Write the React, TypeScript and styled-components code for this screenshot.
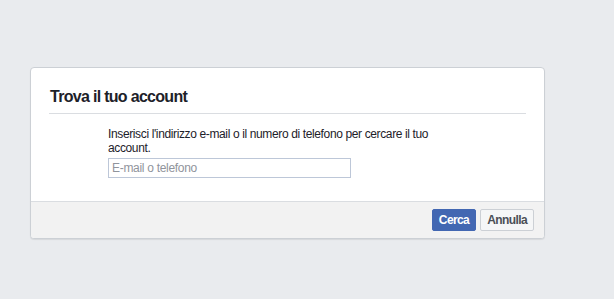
import React from "react";
import styled, { createGlobalStyle } from "styled-components";

const GlobalStyle = createGlobalStyle`
  html, body {
    margin: 0;
    padding: 0;
    background: #e9ebee;
    font-family: "Liberation Sans", Arial, sans-serif;
  }
`;

const Page = styled.div`
  width: 614px;
  height: 299px;
  padding-top: 67px;
  padding-left: 30px;
  box-sizing: border-box;
`;

const Card = styled.div`
  width: 515px;
  background: #fff;
  border: 1px solid #ccd0d5;
  border-radius: 4px;
  box-shadow: 0 1px 1px rgba(0, 0, 0, 0.08);
  box-sizing: border-box;
  overflow: hidden;
`;

const Header = styled.div`
  margin: 0 18px;
  padding: 19px 0 6px 1px;
  border-bottom: 1px solid #dadde1;
`;

const Title = styled.h2`
  margin: 0;
  font-size: 16px;
  line-height: 20px;
  font-weight: bold;
  letter-spacing: -0.7px;
  color: #1d2129;
`;

const Body = styled.div`
  padding: 13px 0 23px 77px;
`;

const Text = styled.p`
  margin: 0 0 3px;
  width: 340px;
  font-size: 12px;
  line-height: 14px;
  letter-spacing: -0.37px;
  color: #1d2129;
`;

const Input = styled.input`
  display: block;
  width: 243px;
  height: 20px;
  margin: 0;
  box-sizing: border-box;
  border: 1px solid #bdc7d8;
  padding: 0 3px;
  font-family: "Liberation Sans", Arial, sans-serif;
  font-size: 12px;
  letter-spacing: -0.3px;
  color: #1d2129;
  outline: none;

  &::placeholder {
    color: #90949c;
  }
`;

const Footer = styled.div`
  display: flex;
  justify-content: flex-end;
  gap: 4px;
  padding: 7px 10px;
  background: #f2f2f2;
  border-top: 1px solid #dadde1;
`;

const Button = styled.button<{ $primary?: boolean }>`
  height: 22px;
  padding: 0 6px;
  border: 1px solid ${(p) => (p.$primary ? "#4267b2" : "#ccd0d5")};
  border-radius: 2px;
  background: ${(p) => (p.$primary ? "#4267b2" : "#f5f6f7")};
  color: ${(p) => (p.$primary ? "#fff" : "#4b4f56")};
  font-family: "Liberation Sans", Arial, sans-serif;
  font-size: 12px;
  font-weight: bold;
  letter-spacing: -0.6px;
  line-height: 20px;
  cursor: pointer;
`;

export default function App() {
  return (
    <>
      <GlobalStyle />
      <Page>
        <Card>
          <Header>
            <Title>Trova il tuo account</Title>
          </Header>
          <Body>
            <Text>
              Inserisci l'indirizzo e-mail o il numero di telefono per cercare il tuo account.
            </Text>
            <Input type="text" placeholder="E-mail o telefono" />
          </Body>
          <Footer>
            <Button $primary>Cerca</Button>
            <Button>Annulla</Button>
          </Footer>
        </Card>
      </Page>
    </>
  );
}
